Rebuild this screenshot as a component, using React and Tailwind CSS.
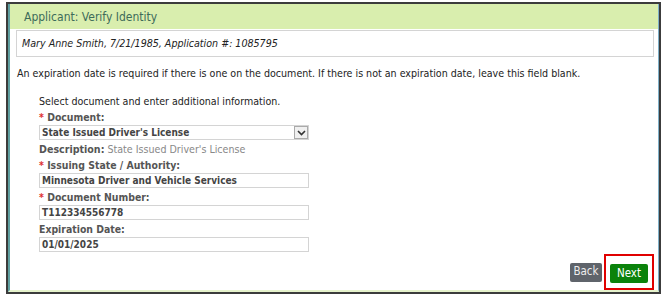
export default function App() {
  const font = { fontFamily: '"DejaVu Sans Condensed", "DejaVu Sans", Verdana, sans-serif' };
  const label = "mt-[3px] h-[13px] leading-[13px] font-bold text-[#555] text-[10.4px] whitespace-nowrap";
  const box = "mt-[1px] w-[270px] h-[15px] border border-[#d4d4d4] flex items-center pl-[2px] font-bold text-[#444] text-[10px] whitespace-nowrap";
  return (
    <div className="w-[663px] h-[296px] bg-white pt-[2px] pl-[6px] pr-[2px] pb-[2px]" style={font}>
      <div className="h-full border-2 border-[#3c3c3c] flex flex-col">
        <div className="flex-1 flex flex-col border-l-2 border-l-[#5f9fa0] border-r border-r-[#7fb0c8] border-b-2 border-b-[#e6f3cc] bg-white">
          <div className="h-[25px] shrink-0 bg-[#d9eeae] pl-[14px] flex items-center text-[12px] text-[#3d6b5a]">
            Applicant: Verify Identity
          </div>
          <div className="ml-[6px] mr-[4px] mt-[1px] h-[27px] shrink-0 border border-[#d4d4d4] flex items-center pl-[5px] text-[10.6px] italic text-[#222]">
            Mary Anne Smith, 7/21/1985, Application #: 1085795
          </div>
          <div className="ml-[7px] mt-[10px] h-[13px] leading-[13px] text-[10.6px] text-[#222] whitespace-nowrap">
            An expiration date is required if there is one on the document. If there is not an expiration date, leave this field blank.
          </div>
          <div className="ml-[29px] mt-[15px] text-[10.6px]">
            <div className="h-[13px] leading-[13px] text-[#222] whitespace-nowrap">Select document and enter additional information.</div>
            <div className={label}><span className="text-[#e03030]">*</span> Document:</div>
            <div className={box + " justify-between"}>
              <span>State Issued Driver's License</span>
              <span className="w-[14px] h-[13px] border border-[#aaa] bg-[#f0f0f0] flex items-center justify-center">
                <svg width="9" height="6" viewBox="0 0 9 6"><path d="M1 1 L4.5 4.5 L8 1" stroke="#333" strokeWidth="1.6" fill="none" /></svg>
              </span>
            </div>
            <div className="mt-[3px] h-[13px] leading-[13px] text-[#888] whitespace-nowrap"><span className="font-bold text-[#555]">Description:</span> State Issued Driver's License</div>
            <div className={label}><span className="text-[#e03030]">*</span> Issuing State / Authority:</div>
            <div className={box}>Minnesota Driver and Vehicle Services</div>
            <div className={label}><span className="text-[#e03030]">*</span> Document Number:</div>
            <div className={box}>T112334556778</div>
            <div className={label}>Expiration Date:</div>
            <div className={box}>01/01/2025</div>
          </div>
          <div className="mt-auto flex justify-end items-center gap-[2px] pr-[4px]">
            <button className="h-[19px] w-[32px] rounded-[2px] bg-[#5f646b] text-[#eee] text-[11.5px]">Back</button>
            <div className="border-2 border-[#e00000] p-[4px]">
              <button className="h-[19px] w-[38px] rounded-[2px] bg-[#0b820b] text-white text-[11.5px]">Next</button>
            </div>
          </div>
        </div>
      </div>
    </div>
  );
}
